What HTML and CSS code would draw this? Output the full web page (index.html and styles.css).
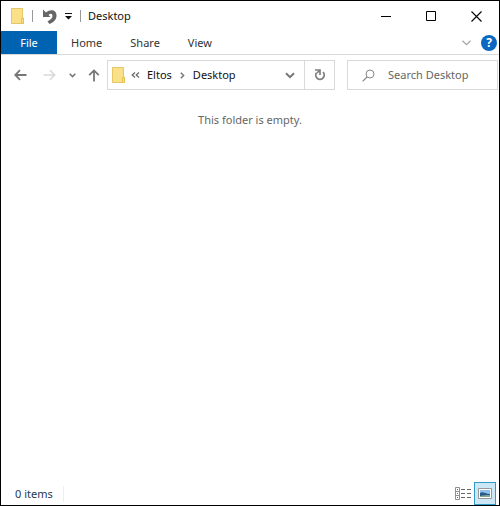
FILE: index.html
```html
<!DOCTYPE html>
<html lang="en">
<head>
<meta charset="utf-8">
<meta name="viewport" content="width=device-width, initial-scale=1">
<title>Desktop</title>
<link rel="stylesheet" href="styles.css">
</head>
<body>
<svg class="defs" width="0" height="0" aria-hidden="true">
  <symbol id="folder" viewBox="0 0 14 16">
    <path d="M.5.5h11v9.500h1v5.500H.5z" fill="#fbe08a" stroke="#e6c765"/>
    <path d="M10.500 10.500h2v5h-2z" fill="#fbe08a" stroke="#e3c258"/>
  </symbol>
</svg>
<div class="window">
  <header class="titlebar">
    <svg class="folder" width="14" height="16" aria-hidden="true"><use href="#folder"/></svg>
    <span class="rule"></span>
    <button class="plain undo" aria-label="Undo">
      <svg width="14" height="16" viewBox="0 0 14 16"><path d="M0 1.500v7.500h7.500L5.500 7C7.500 5 9.500 5.500 9.500 8c0 2-1.500 3.500-5 5.500L6.500 16c4.500-2 7-4.500 7-8.500C13.500 2 7.500.5 3 4.500z" fill="#666"/></svg>
    </button>
    <button class="plain customize" aria-label="Customize toolbar">
      <svg width="7" height="7" viewBox="0 0 7 7"><path d="M0 0h7v1H0zM0 3h7L3.500 6.500z" fill="#111"/></svg>
    </button>
    <span class="rule"></span>
    <h1 class="title">Desktop</h1>
    <div class="controls">
      <button class="plain control" aria-label="Minimize"><svg width="11" height="11" viewBox="0 0 11 11"><path d="M0 5.500h10" stroke="#000"/></svg></button>
      <button class="plain control" aria-label="Maximize"><svg width="11" height="11" viewBox="0 0 11 11"><path d="M.5.5h9v9h-9z" fill="none" stroke="#000"/></svg></button>
      <button class="plain control" aria-label="Close"><svg width="11" height="11" viewBox="0 0 11 11"><path d="M.5.5l10 10M10.500.5l-10 10" stroke="#000" stroke-width="1.100"/></svg></button>
    </div>
  </header>

  <nav class="ribbon" aria-label="Ribbon">
    <button class="plain tab file">File</button>
    <button class="plain tab">Home</button>
    <button class="plain tab">Share</button>
    <button class="plain tab">View</button>
    <button class="plain expand" aria-label="Expand ribbon"><svg width="9" height="6" viewBox="0 0 9 6"><path d="M.5.7l4 4 4-4" fill="none" stroke="#a6a6a6" stroke-width="1.300"/></svg></button>
    <button class="plain help" aria-label="Help">?</button>
  </nav>

  <div class="navigation">
    <div class="history">
      <button class="plain" aria-label="Back"><svg width="13" height="12" viewBox="0 0 13 12"><path d="M12.500 6H1.500M6 1.200L1.300 6 6 10.800" fill="none" stroke="#777" stroke-width="1.800"/></svg></button>
      <button class="plain forward" aria-label="Forward"><svg width="13" height="12" viewBox="0 0 13 12"><path d="M.5 6h11M7 1.200L11.700 6 7 10.800" fill="none" stroke="#d9d9d9" stroke-width="1.600"/></svg></button>
      <button class="plain recent" aria-label="Recent locations"><svg width="7" height="5" viewBox="0 0 7 5"><path d="M.7.7l2.800 2.800L6.300.7" fill="none" stroke="#777" stroke-width="1.600"/></svg></button>
      <button class="plain" aria-label="Up"><svg width="12" height="13" viewBox="0 0 12 13"><path d="M6 12.500V1.500M1.200 6.200L6 1.400l4.800 4.800" fill="none" stroke="#777" stroke-width="1.800"/></svg></button>
    </div>
    <div class="address">
      <svg class="folder" width="14" height="16" aria-hidden="true"><use href="#folder"/></svg>
      <button class="plain overflow" aria-label="More locations"><svg width="9" height="6" viewBox="0 0 9 6"><path d="M4 .5L1.200 3 4 5.500M8 .5L5.200 3 8 5.500" fill="none" stroke="#666" stroke-width="1.200"/></svg></button>
      <a class="crumb" href="#eltos">Eltos</a>
      <svg class="next" width="5" height="7" viewBox="0 0 5 7" aria-hidden="true"><path d="M.8.7l2.800 2.800L.8 6.300" fill="none" stroke="#777" stroke-width="1.500"/></svg>
      <a class="crumb" href="#desktop">Desktop</a>
      <button class="plain previous" aria-label="Previous locations"><svg width="10" height="7" viewBox="0 0 10 7"><path d="M1 1.200l4 4 4-4" fill="none" stroke="#777" stroke-width="2"/></svg></button>
      <button class="plain refresh" aria-label="Refresh"><svg width="12" height="12" viewBox="0 0 12 12"><path d="M9 3.200A4.200 4.200 0 1 1 2.500 3.800" fill="none" stroke="#808080" stroke-width="1.800"/><path d="M1 1h5v5M5.500 1.500L3 4" fill="none" stroke="#808080" stroke-width="1.700"/></svg></button>
    </div>
    <label class="search">
      <svg width="13" height="13" viewBox="0 0 13 13" aria-hidden="true"><circle cx="8" cy="5" r="4" fill="none" stroke="#888"/><path d="M5 8L.6 12.400" stroke="#888" stroke-width="1.200"/></svg>
      <input type="search" placeholder="Search Desktop" aria-label="Search Desktop">
    </label>
  </div>

  <main class="content"><p>This folder is empty.</p></main>

  <footer class="status">
    <span class="count">0 items</span>
    <button class="plain view" aria-label="Details view">
      <svg width="16" height="13" viewBox="0 0 16 13"><path d="M.5.5h4v12h-4zM.5 4.500h4M.5 8.500h4" fill="none" stroke="#909090"/><path d="M2 2.500h1M2 6.500h1M2 10.500h1M6 2.500h4M12 2.500h4M6 6.500h4M12 6.500h4M6 10.500h4M12 10.500h4" stroke="#666"/></svg>
    </button>
    <button class="plain view selected" aria-label="Large icons view" aria-pressed="true">
      <svg width="14" height="11" viewBox="0 0 14 11"><path d="M.5.5h13v10H.5z" fill="#fff" stroke="#999"/><path d="M2 2h10v7H2z" fill="#90c0ec"/><path d="M2 5c3-2 5 1 10 1v3H2z" fill="#285a8c"/><path d="M2 8c4-1 6-1 10-1v2H2z" fill="#7fa98f"/></svg>
    </button>
  </footer>
</div>
</body>
</html>
```

FILE: styles.css
```css
* { box-sizing: border-box; }

body {
  margin: 0;
  font: 11px/16px "Noto Sans", "Open Sans", sans-serif;
  color: #111;
}

svg { display: block; flex: none; }
.defs { position: absolute; }

.window {
  display: flex;
  flex-direction: column;
  min-height: 100vh;
  border: 1px solid #000;
  background: #fff;
}

.plain {
  display: flex;
  align-items: center;
  justify-content: center;
  margin: 0;
  padding: 0;
  border: 0;
  background: none;
  color: inherit;
  font: inherit;
}

.titlebar {
  display: flex;
  align-items: center;
  height: 30px;
  padding-left: 10px;
}

.rule { width: 1px; height: 12px; background: #999; }
.titlebar .folder { margin-right: 7px; }
.undo { margin-left: 10px; }
.customize { margin: 0 8px; }
.title { margin: 0 0 0 7px; font-size: 11px; font-weight: 400; }
.controls { display: flex; align-self: stretch; margin-left: auto; }
.control { width: 45px; }

.ribbon {
  display: flex;
  align-items: center;
  height: 24px;
  border-bottom: 1px solid #d9d9d9;
}

.tab { align-self: stretch; padding: 0 14px; color: #333; }
.file { width: 56px; background: #0063b1; color: #fff; }
.expand { margin-left: auto; }

.help {
  width: 16px;
  height: 16px;
  margin: 0 2px 0 10px;
  border-radius: 50%;
  background: #0a68c0;
  color: #fff;
  font-size: 12px;
  font-weight: 700;
}

.navigation {
  display: grid;
  grid-template-columns: auto 228fr 12px 151fr;
  height: 30px;
  margin: 5px 1px 0 0;
}

.history { display: flex; align-items: center; padding: 0 7px 0 13px; }
.forward { margin: 0 13px 0 16px; }
.recent { margin-right: 12px; }

.address,
.search {
  display: flex;
  align-items: center;
  min-width: 0;
  border: 1px solid #d9d9d9;
}

.address { padding-left: 4px; }
.overflow { margin: 0 7px 0 5px; }
.crumb { color: #111; text-decoration: none; }
.next { margin: 0 8px; }
.previous { margin: 0 9px 0 auto; }
.refresh { align-self: stretch; width: 30px; border-left: 1px solid #d9d9d9; }

.search { grid-column: 4; padding-left: 14px; }

.search input {
  flex: 1;
  min-width: 0;
  margin-left: 13px;
  padding: 0;
  border: 0;
  outline: 0;
  background: none;
  font: inherit;
}

.search input::placeholder { color: #666; opacity: 1; }

.content { flex: 1; padding-top: 22px; color: #666; text-align: center; }
.content p { margin: 0; }

.status {
  display: flex;
  align-items: center;
  height: 23px;
  padding: 0 3px 0 14px;
  color: #1e3953;
}

.count { margin-right: auto; padding-right: 10px; border-right: 1px solid #eee; }
.view { align-self: stretch; width: 22px; }
.selected { border: 1px solid #3399c8; background: #cce8f6; }
```
